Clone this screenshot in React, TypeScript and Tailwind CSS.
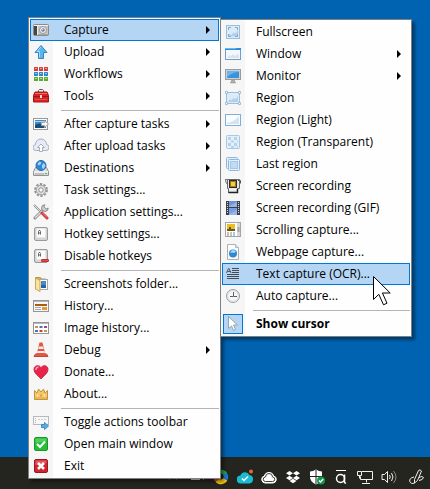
import type { ReactNode } from "react";
import clsx from "clsx";

type MenuEntry = {
  label: string;
  icon: ReactNode;
  submenu?: boolean;
  active?: boolean;
  checked?: boolean;
};

const KeyCap = () => (
  <>
    <rect x="1.5" y="1.5" width="13" height="13" rx="1.5" fill="#d4d4d4" stroke="#9a9a9a" />
    <rect x="3.5" y="2.5" width="9" height="9" rx="1" fill="#fbfbfb" stroke="#e6e6e6" />
    <path d="M5.5 8.5v-3l.5-1h1l.5 1v3M5.5 7h2" fill="none" stroke="#666" />
  </>
);

const PictureFrame = () => (
  <>
    <rect x="1.5" y="1.5" width="13" height="13" fill="#dcebf8" stroke="#9dbfdd" />
    <path d="M3 12.5l2-3 1.5 1.5L9 8l1 2 3-4v6.5z" fill="#b4d0e9" />
  </>
);

const MENU: MenuEntry[][] = [
  [
    {
      label: "Capture",
      submenu: true,
      active: true,
      icon: (
        <>
          <rect x="0.5" y="2.5" width="15" height="11" rx="1" fill="#c9c6c2" stroke="#8b8b8b" />
          <rect x="1" y="4" width="3" height="9" fill="#454545" />
          <path d="M4.5 4v9" stroke="#ededed" />
          <path d="M1 3.5h14" stroke="#f2f2f2" />
          <path d="M5 12.5h10" stroke="#a9a6a2" />
          <circle cx="10" cy="8" r="3.5" fill="#f1f1f1" stroke="#979797" />
          <circle cx="10" cy="8" r="1.8" fill="#6f7890" />
          <circle cx="9.5" cy="7.5" r="0.8" fill="#dfeaf8" />
        </>
      ),
    },
    {
      label: "Upload",
      submenu: true,
      icon: (
        <>
          <path d="M8 1.5l6 7h-3.500v6h-5v-6H2z" fill="#5bb4ee" stroke="#2f86c6" />
          <path d="M8 3L4 7.5h2.500v6" fill="none" stroke="#a6dcfb" />
        </>
      ),
    },
    {
      label: "Workflows",
      submenu: true,
      icon: (
        <>
          {["#d23c3c", "#2f86cc", "#58ab2c"].map((fill, row) =>
            [1, 6, 11].map((x) => (
              <g key={`${fill}${x}`}>
                <rect x={x} y={row * 5 + 1} width="4" height="4" rx="0.5" fill={fill} />
                <rect x={x + 1} y={row * 5 + 2} width="2" height="1" fill="#fff" opacity="0.5" />
              </g>
            ))
          )}
        </>
      ),
    },
    {
      label: "Tools",
      submenu: true,
      icon: (
        <>
          <path d="M5.5 4V2.500l1-1h3l1 1V4" fill="none" stroke="#555" />
          <path d="M2 4h12l1.500 3.500v6.500H.5V7.500z" fill="#d92323" stroke="#a51616" />
          <path d="M2 5.500h12" stroke="#ef6a6a" />
          <path d="M1 8.500h14" stroke="#a31111" />
          <rect x="7" y="7" width="2" height="3" fill="#f5e4e4" />
          <path d="M2 11.500h12" stroke="#e84c4c" />
        </>
      ),
    },
  ],
  [
    {
      label: "After capture tasks",
      submenu: true,
      icon: (
        <>
          <rect x="0.5" y="2.5" width="14" height="11" fill="#fff" stroke="#9a9a9a" />
          <rect x="2" y="4" width="11" height="8" fill="#3f8ccb" />
          <path d="M2 9q4-3 9 0v3H2z" fill="#1d4c78" />
          <path d="M2 5.500h10" stroke="#a8d4f2" />
          <path d="M8.5 6.500h3v-2l4 3.500-4 3.500v-2h-3z" fill="#f6f6f6" stroke="#a5a5a5" />
        </>
      ),
    },
    {
      label: "After upload tasks",
      submenu: true,
      icon: (
        <>
          <path d="M3.500 12.500a3 3 0 0 1-1-6 5.500 5.500 0 0 1 11 0 3 3 0 0 1-1 6z" fill="#e8ebf3" stroke="#a7aec0" />
          <path d="M8 6l3.500 3.500h-2v4h-3v-4h-2z" fill="#fff" stroke="#a7aec0" />
        </>
      ),
    },
    {
      label: "Destinations",
      submenu: true,
      icon: (
        <>
          <path d="M2.500 7.500h11l2 4v4H.5v-4z" fill="#dcdcdc" stroke="#929292" />
          <path d="M1 12h14" stroke="#fff" />
          <path d="M2 14h9" stroke="#a5a5a5" />
          <rect x="12" y="13" width="2" height="1" fill="#3fc43f" />
          <circle cx="8" cy="5.5" r="5" fill="#2f86d6" stroke="#2468ab" />
          <path d="M4.500 4l2-2.500 2 1-1 2-2 1zM9 5l2-2 1.500 3-2 3-1.500-1z" fill="#a4d5f5" />
        </>
      ),
    },
    {
      label: "Task settings...",
      icon: (
        <>
          <circle cx="8" cy="8" r="5.9" fill="none" stroke="#949494" strokeWidth="2" strokeDasharray="2.3 1.4" />
          <circle cx="8" cy="8" r="4.8" fill="#dedede" stroke="#a0a0a0" />
          <circle cx="8" cy="8" r="2.2" fill="#fff" stroke="#8e8e8e" />
        </>
      ),
    },
    {
      label: "Application settings...",
      icon: (
        <>
          <path d="M1 1l8 8" stroke="#8a8a8a" strokeWidth="2" />
          <path d="M1 1l7 7" stroke="#e0e0e0" />
          <path d="M2 14l9-9" stroke="#8a8a8a" strokeWidth="3" strokeLinecap="round" />
          <path d="M2 14l9-9" stroke="#dedede" strokeWidth="1.5" />
          <path d="M12 .8A3.300 3.300 0 1 0 15.200 4l-2 1-2.200-2.200z" fill="#cfcfcf" stroke="#8a8a8a" />
          <path d="M9 9l5 5" stroke="#d33c3c" strokeWidth="3" strokeLinecap="round" />
          <path d="M9.500 9l4.500 4.500" stroke="#ef7b7b" />
        </>
      ),
    },
    { label: "Hotkey settings...", icon: <KeyCap /> },
    {
      label: "Disable hotkeys",
      icon: (
        <>
          <KeyCap />
          <rect x="8.5" y="11.5" width="7" height="2" rx="0.5" fill="#ed4b4b" stroke="#c62a2a" />
        </>
      ),
    },
  ],
  [
    {
      label: "Screenshots folder...",
      icon: (
        <>
          <path d="M2.500 1.500h5l1 1.500h4v10h-10z" fill="#e5b650" stroke="#c0923a" />
          <rect x="6.5" y="3.5" width="8" height="10" fill="#fff" stroke="#a8a8a8" />
          <rect x="8" y="5" width="5" height="7" fill="#3f8dcb" />
          <path d="M8 9h5v3H8z" fill="#2a639b" />
          <path d="M2.500 2L7 4.500v11L2.500 13z" fill="#fae3a0" stroke="#cfa64f" />
        </>
      ),
    },
    {
      label: "History...",
      icon: (
        <>
          <rect x="0.5" y="2.5" width="15" height="11" fill="#f7f7f7" stroke="#959595" />
          <path d="M1 3.500h14" stroke="#b4b8be" />
          <path d="M2 7h12" stroke="#a65b16" strokeWidth="2" />
          <path d="M2 9.500h6M2 11.500h6" stroke="#a9a9a9" />
          <rect x="9" y="9" width="5" height="3" fill="#e49a37" />
        </>
      ),
    },
    {
      label: "Image history...",
      icon: (
        <>
          <rect x="0.5" y="2.5" width="15" height="11" fill="#fff" stroke="#959595" />
          <path d="M1 3.500h14" stroke="#b4b8be" />
          <path d="M2 7h3M11 11h3" stroke="#c8934c" strokeWidth="2" />
          <path d="M6.500 7h3M2 11h3" stroke="#4c72b0" strokeWidth="2" />
          <path d="M6.500 11h3" stroke="#c5453c" strokeWidth="2" />
          <path d="M11 7h3" stroke="#9a4a86" strokeWidth="2" />
        </>
      ),
    },
    {
      label: "Debug",
      submenu: true,
      icon: (
        <>
          <path d="M2.500 12h11l1.500 2.500H1z" fill="#e45848" stroke="#c04636" />
          <path d="M6.500.5h3l3 12.500h-9z" fill="#e6553f" />
          <path d="M6 4.500h4l.7 2.500H5.300zM4.600 9h6.800l.6 2H4z" fill="#f4eeee" />
        </>
      ),
    },
    {
      label: "Donate...",
      icon: (
        <>
          <path
            d="M8 15C5.500 12 1 9.500 1 5.300 1 1 6.500.5 8 3.700 9.500.5 15 1 15 5.300 15 9.500 10.500 12 8 15z"
            fill="#e8244b"
            stroke="#c31b3c"
            strokeWidth="0.8"
          />
          <path d="M3 6q0-3 2.500-3" fill="none" stroke="#ff9bb0" strokeWidth="1.5" />
        </>
      ),
    },
    {
      label: "About...",
      icon: (
        <>
          <path d="M1.500 13.500v-9L4 7l1.500-4L8 6l2.500-3L12 7l2.500-2.500v9z" fill="#f2c462" stroke="#c3923a" />
          <path d="M2 7v6h12V7l-2 1.500-2-3L8 8 6 5.500l-2 3z" fill="#f3c96c" />
          <path d="M2 12h12" stroke="#dba545" />
          <path d="M4 9.500h1M11 9.500h1" stroke="#fff1b8" strokeWidth="2" />
          <path d="M7.500 9.500h1" stroke="#e06a3a" strokeWidth="2" />
        </>
      ),
    },
  ],
  [
    {
      label: "Toggle actions toolbar",
      icon: (
        <>
          <rect x="0.5" y="2.5" width="15" height="8" fill="#f7f7f7" stroke="#b5babf" />
          <path d="M2.500 4v5" stroke="#b5b5b5" strokeDasharray="1 1" />
          <path d="M5 5.500h2M8 5.500h2M11 5.500h2" stroke="#cfcfcf" />
          <path d="M8.500 10.500h3v-2l4 3.500-4 3.500v-2h-3z" fill="#57aee6" stroke="#3f8dc8" />
        </>
      ),
    },
    {
      label: "Open main window",
      icon: (
        <>
          <rect x="1.5" y="1.5" width="13" height="13" rx="1.5" fill="#22bf37" stroke="#1c962b" />
          <path d="M2.500 7V2.500h11V5z" fill="#6fd97c" opacity="0.6" />
          <path d="M4 8l3 3 5-5.500" fill="none" stroke="#fff" strokeWidth="2" />
        </>
      ),
    },
    {
      label: "Exit",
      icon: (
        <>
          <rect x="1.5" y="1.5" width="13" height="13" rx="1.5" fill="#cf252d" stroke="#9c171e" />
          <path d="M2.500 7V2.500h11V5z" fill="#ec7b80" opacity="0.6" />
          <path d="M5 5l6 6M11 5l-6 6" stroke="#fff" strokeWidth="2.5" />
        </>
      ),
    },
  ],
];

const CAPTURE_MENU: MenuEntry[][] = [
  [
    {
      label: "Fullscreen",
      icon: (
        <>
          <PictureFrame />
          <path d="M3.500 6V3.500H6M10 3.500h2.500V6M12.500 10v2.500H10M6 12.500H3.500V10" fill="none" stroke="#7fa9cf" />
        </>
      ),
    },
    {
      label: "Window",
      submenu: true,
      icon: (
        <>
          <rect x="0.5" y="2.5" width="15" height="11" fill="#f4f8fc" stroke="#6c9fca" />
          <path d="M0 3h16" stroke="#2c8ed8" strokeWidth="2" />
          <path d="M0 2.500h11" stroke="#63bdf2" />
          <path d="M2 12l2-3 2 1 2-2 2 2 2-2 2 1v3z" fill="#dde2e8" />
        </>
      ),
    },
    {
      label: "Monitor",
      submenu: true,
      icon: (
        <>
          <path d="M6.500 12h3v2h1v1h-5v-1h1z" fill="#b0b0b0" stroke="#8f8f8f" strokeWidth="0.5" />
          <rect x="0.5" y="1.5" width="15" height="10" fill="#cfcfcf" stroke="#9c9c9c" />
          <rect x="2" y="3" width="12" height="7" fill="#3a93db" />
          <path d="M2 9.500Q7 4 14 4V3H2z" fill="#69b5ee" />
        </>
      ),
    },
    {
      label: "Region",
      icon: (
        <>
          <rect x="1.5" y="2.5" width="13" height="11" fill="#dcebf8" stroke="#9dbfdd" />
          <path d="M3 12l2-3 1.500 1.500L9 7.500l1 2L13 6v6z" fill="#b4d0e9" />
          {[1.5, 14.5].map((x) =>
            [2.5, 13.5].map((y) => <circle key={`${x}-${y}`} cx={x} cy={y} r="1.2" fill="#fff" stroke="#7fa9cf" />)
          )}
        </>
      ),
    },
    {
      label: "Region (Light)",
      icon: (
        <>
          <rect x="0.5" y="2.5" width="15" height="11" fill="#f8fbff" stroke="#86aed3" />
          <path d="M2 12v-1Q9 10 14 4v8z" fill="#d2e4f4" />
        </>
      ),
    },
    {
      label: "Region (Transparent)",
      icon: (
        <>
          <rect x="1.5" y="1.5" width="13" height="13" rx="1" fill="#e3effa" stroke="#a8c8e6" />
          <path d="M3 4.500h10M3 10.500h10" stroke="#b7d3ec" strokeWidth="3" strokeDasharray="3 3" />
          <path d="M6 7.500h7M6 13h7" stroke="#b7d3ec" strokeWidth="2" strokeDasharray="3 3" />
        </>
      ),
    },
    {
      label: "Last region",
      icon: (
        <>
          <rect x="1.5" y="1.5" width="11" height="11" rx="1" fill="#e2effa" stroke="#8fb8dc" />
          <rect x="3.5" y="3.5" width="11" height="11" rx="1" fill="#e2effa" stroke="#8fb8dc" />
          <rect x="5.5" y="5.5" width="7" height="7" fill="#c3dbf0" stroke="#a5c8e5" />
        </>
      ),
    },
    {
      label: "Screen recording",
      icon: (
        <>
          <path d="M0 1.500h3.500v4h-2z" fill="#e4e4e4" stroke="#777" />
          <path d="M2.500 1.500h12v9h-2v4h-9v-4h-1z" fill="#e6e6e6" stroke="#666" />
          <rect x="4" y="2" width="8" height="8" fill="#2b2b2b" />
          <rect x="5.5" y="3.5" width="5" height="5" fill="#f0cf45" stroke="#a47a15" />
          <path d="M4 11.500h8" stroke="#f7f7f7" />
          <path d="M12.500 11v3.500h-9" fill="none" stroke="#222" strokeWidth="1.5" />
          <path d="M13 2.500h2.500v3" fill="none" stroke="#555" />
        </>
      ),
    },
    {
      label: "Screen recording (GIF)",
      icon: (
        <>
          <rect x="1" y="1" width="14" height="14" fill="#3a3f4a" />
          <rect x="4" y="1" width="8" height="6" fill="#6c93d4" />
          <rect x="4" y="8" width="8" height="7" fill="#7a9fe0" />
          <path d="M4 6l8-4v5H4zM4 14l8-4v5H4z" fill="#93b3ea" />
          <path d="M2.500 2v12M13.500 2v12" stroke="#d7d9dd" strokeDasharray="1 1" />
        </>
      ),
    },
    {
      label: "Scrolling capture...",
      icon: (
        <>
          <rect x="0.5" y="0.5" width="15" height="14" fill="#fff" stroke="#a5a5a5" />
          <rect x="2" y="2" width="8" height="7" fill="#e9bf22" />
          <path d="M2 7h2V5h2v2h4v2H2z" fill="#6e5715" />
          <path d="M2 11h2M2 13h2" stroke="#e45252" />
          <path d="M5 11h2M5 13h2" stroke="#4fb057" />
          <path d="M8 11h2M8 13h2" stroke="#4a8de0" />
          <path d="M13.500 1v13" stroke="#d6d6d6" strokeWidth="3" />
          <path d="M13.500 5v5" stroke="#a5a5a5" strokeWidth="2" />
        </>
      ),
    },
    {
      label: "Webpage capture...",
      icon: (
        <>
          <path d="M2.500.5h8l3 3v12h-11z" fill="#fcfcfc" stroke="#b0b0b0" />
          <path d="M10.500.5v3h3" fill="#ddd" stroke="#a5bfd5" />
          <circle cx="8" cy="9.5" r="4" fill="#3287cd" />
          <path d="M5 9l1.500-2.500L9 6l2 1.500L9 9l-2-.5z" fill="#a8dcf7" />
        </>
      ),
    },
    {
      label: "Text capture (OCR)...",
      active: true,
      icon: (
        <>
          <path d="M7 2.500h7M7 4.500h7M7 6.500h7M2 8.500h12M2 10.500h12M2 12.500h12" stroke="#454b52" />
          <path d="M1.500 7l2-4.500H4L6 7M2.500 5.500h3" fill="none" stroke="#4d545c" />
        </>
      ),
    },
    {
      label: "Auto capture...",
      icon: (
        <>
          <circle cx="8" cy="8" r="6.5" fill="#f8f8f8" stroke="#999ea2" />
          <circle cx="8" cy="8" r="5.3" fill="none" stroke="#d5d8da" />
          <path d="M8.500 4v4.500H12M5 8.500h3" fill="none" stroke="#5a5f64" />
        </>
      ),
    },
  ],
  [
    {
      label: "Show cursor",
      checked: true,
      icon: <path d="M3.500.5v12l3-2.500 2 4.500 2-1-2-4.500h4z" fill="#fff" stroke="#9aa3aa" />,
    },
  ],
];

const TRAY = [
  {
    label: "Show hidden icons",
    icon: <path d="M4 10l4-4 4 4" fill="none" stroke="#e8e8e8" strokeWidth="1.5" />,
  },
  {
    label: "Camera",
    icon: <path d="M2 3h9v8H2zM11 7l4-3v7z" fill="#d4d4d4" />,
  },
  {
    label: "Drive",
    icon: (
      <>
        <path d="M8 8L12.500 2.400A7.200 7.200 0 0 1 14.200 11.600z" fill="#1d77d3" />
        <path d="M8 8V.8a7.200 7.200 0 0 1 6 3.200z" fill="#21a651" />
        <path d="M8 8l6.200 3.600A7.200 7.200 0 0 1 2.500 12.800z" fill="#f6c416" />
        <path d="M8 8l-5.500 4.800A7.200 7.200 0 0 1 8 .8z" fill="#e2402f" />
        <circle cx="7.5" cy="7.5" r="3" fill="#20231f" />
      </>
    ),
  },
  {
    label: "Cloud sync",
    icon: (
      <>
        <path d="M4 14.500a4 4 0 0 1-.6-8A5 5 0 0 1 12.500 6a4.300 4.300 0 0 1-.2 8.500z" fill="#19bcd2" />
        <path d="M5 9.500l2 2 4-4" fill="none" stroke="#fff" strokeWidth="1.5" />
        <circle cx="14" cy="2.5" r="2" fill="#ea6236" />
      </>
    ),
  },
  {
    label: "Cloud storage",
    icon: (
      <>
        <path d="M4 14a3.600 3.600 0 0 1-.8-7 5 5 0 0 1 9.600 0 3.600 3.600 0 0 1-.8 7z" fill="#fff" stroke="#fff" />
        <path d="M4.500 12.500a2.200 2.200 0 0 1 0-4.500 3.500 3.500 0 0 1 7 0 2.200 2.200 0 0 1 0 4.500z" fill="#fff" stroke="#3c3f39" />
      </>
    ),
  },
  {
    label: "Dropbox",
    icon: (
      <path
        d="M4.500 2L8 4.200 4.500 6.400 1 4.200zM11.500 2L15 4.200l-3.500 2.200L8 4.200zM4.500 6.800L8 9l-3.500 2.200L1 9zM11.500 6.800L15 9l-3.500 2.200L8 9zM8 9.800l3.500 2.200L8 14.200 4.500 12z"
        fill="#fff"
      />
    ),
  },
  {
    label: "Security",
    icon: (
      <>
        <path d="M7 .5q3 2 6 2V8q0 4.500-6 7.500Q1 12.500 1 8V2.500q3 0 6-2z" fill="#fff" />
        <path d="M7 1v14M1 7.500h12" stroke="#20231f" />
        <circle cx="12" cy="11.5" r="4" fill="#12984f" />
        <path d="M10 11.500l1.500 1.500 2.700-3" fill="none" stroke="#fff" strokeWidth="1.3" />
      </>
    ),
  },
  {
    label: "Input language",
    icon: (
      <>
        <path d="M3 1.500h10" stroke="#fff" />
        <circle cx="7.5" cy="9.5" r="4" fill="none" stroke="#fff" strokeWidth="1.5" />
        <path d="M11.500 5.500v8l1.500 1" fill="none" stroke="#fff" strokeWidth="1.5" />
      </>
    ),
  },
  {
    label: "Network",
    icon: (
      <>
        <path d="M5 2.500h10.500v8h-12v-3M9.500 10.500v3M5 14.500h8" fill="none" stroke="#f0f0f0" />
        <path d="M.5 2.500h4v4h-4zM2.500 6.500v3" fill="none" stroke="#f0f0f0" />
      </>
    ),
  },
  {
    label: "Volume",
    icon: (
      <>
        <path d="M1 5.500h2.500l3-3v11l-3-3H1z" fill="none" stroke="#f0f0f0" />
        <path d="M8.500 6q1.500 2 0 4M10.500 4q3 4 0 8" fill="none" stroke="#f0f0f0" />
        <path d="M12.500 2q5 6 0 12" fill="none" stroke="#888" />
      </>
    ),
  },
  {
    label: "Pen workspace",
    icon: (
      <>
        <path d="M5.500 10.500L9.500 1.500q1.500-1.500 3 .5L8.500 11.500 5.500 14z" fill="none" stroke="#f0f0f0" />
        <path d="M5 8Q0 9 .8 12.500 2 15.500 5.500 14M10 8.500q3.500-2 4.500 0-.5 2.500-4.500 3" fill="none" stroke="#f0f0f0" />
      </>
    ),
  },
];

function Glyph({ children }: { children: ReactNode }) {
  return (
    <svg viewBox="0 0 16 16" className="size-4 shrink-0" aria-hidden="true">
      {children}
    </svg>
  );
}

function MenuItem({ entry }: { entry: MenuEntry }) {
  return (
    <button
      type="button"
      role={entry.checked ? "menuitemcheckbox" : "menuitem"}
      aria-checked={entry.checked}
      aria-haspopup={entry.submenu ? "menu" : undefined}
      className={clsx(
        "flex h-[22px] w-full items-center gap-[13px] border pr-2 text-left whitespace-nowrap",
        entry.active ? "border-[#0078d7] bg-[#b5d5f4]" : "border-transparent",
        entry.checked && "font-bold"
      )}
    >
      <span
        className={clsx(
          "flex size-5 shrink-0 items-center justify-center",
          entry.checked && "border border-[#0078d7] bg-[#b5d5f4]"
        )}
      >
        <Glyph>{entry.icon}</Glyph>
      </span>
      <span className="flex-1">{entry.label}</span>
      {entry.submenu && (
        <svg viewBox="0 0 4 8" className="h-2 w-1" aria-hidden="true">
          <path d="M0 0l4 4-4 4z" />
        </svg>
      )}
    </button>
  );
}

function Menu({ label, groups, className }: { label: string; groups: MenuEntry[][]; className: string }) {
  return (
    <div
      role="menu"
      aria-label={label}
      className={clsx(
        "absolute border border-[#808080] bg-linear-to-r from-[#f6f6f6] from-[24px] to-[#fefefe] to-[24px] p-px shadow-[3px_3px_3px_rgba(0,0,0,0.4)]",
        className
      )}
    >
      {groups.map((group, i) => (
        <div key={group[0].label}>
          {i > 0 && (
            <div className="flex h-[6px] items-center pl-[31px]">
              <hr className="w-full border-[#b4b4b4]" />
            </div>
          )}
          {group.map((entry) => (
            <MenuItem key={entry.label} entry={entry} />
          ))}
        </div>
      ))}
    </div>
  );
}

export default function App() {
  return (
    <div className="relative flex min-h-screen flex-col overflow-hidden bg-[#0063b1] font-['Open_Sans','Noto_Sans',sans-serif] text-[12px] leading-4 text-black">
      <main className="flex-1">
        <Menu label="Main menu" groups={MENU} className="top-[17px] left-7 z-10 w-[193px]" />
        <Menu label="Capture" groups={CAPTURE_MENU} className="top-[19px] left-[220px] z-20 w-[192px]" />
        <svg viewBox="0 0 19 30" className="absolute top-[276px] left-[373px] z-30 h-[30px] w-[19px]" aria-hidden="true">
          <path d="M.5.5v23l5.300-5.200 4.700 10.500 3.500-1.600-4.600-10.200h7.800z" fill="#fff" stroke="#000" />
        </svg>
      </main>
      <footer className="flex h-8 items-center justify-end bg-[#24251f] pt-2 pr-px">
        {TRAY.map((item) => (
          <button
            key={item.label}
            type="button"
            aria-label={item.label}
            className="flex size-6 items-center justify-center last:ml-1"
          >
            <Glyph>{item.icon}</Glyph>
          </button>
        ))}
      </footer>
    </div>
  );
}
